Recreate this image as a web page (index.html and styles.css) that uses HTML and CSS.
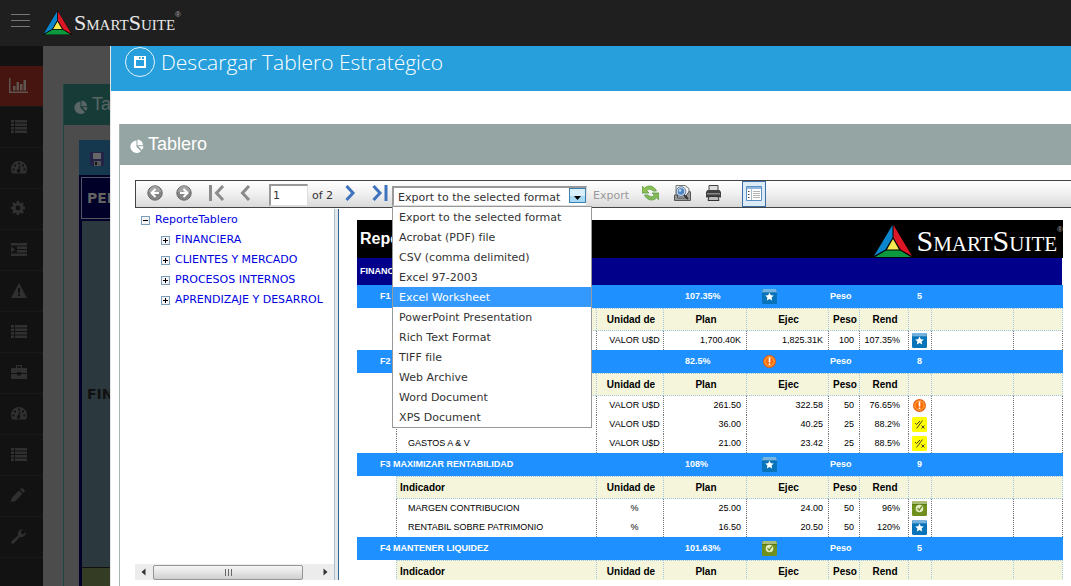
FILE: index.html
```
<!DOCTYPE html>
<html lang="es">
<head>
<meta charset="utf-8">
<title>SmartSuite - Tablero</title>
<link rel="stylesheet" href="styles.css">
</head>
<body>
<svg class="defs" aria-hidden="true">
  <symbol id="logo" viewBox="0 0 40 34">
    <path d="M20 0 0 34h40z" fill="#000"/>
    <path d="M19.500 1.500v12.500l-7 12L1 32.500z" fill="#0a86cc"/>
    <path d="M20.500 1.500v12.500l7 12L39 32.500z" fill="#dd1626"/>
    <path d="M2 33.500 13 27h14l11 6.500z" fill="#0d9a3e"/>
    <path d="M20 15.500 14 26h12z" fill="#f5ea50"/>
  </symbol>
  <symbol id="list" viewBox="0 0 16 13">
    <path d="M0 0h3v2.500H0zM4 0h12v2.500H4zM0 3.500h3V6H0zM4 3.500h12V6H4zM0 7h3v2.500H0zM4 7h12v2.500H4zM0 10.500h3V13H0zM4 10.500h12V13H4z"/>
  </symbol>
  <symbol id="gauge" viewBox="0 0 16 13">
    <path fill-rule="evenodd" d="M8 0a8 8 0 0 1 8 8c0 2-.5 3.200-1.200 4.500H1.200C.5 11.200 0 10 0 8a8 8 0 0 1 8-8zM7 1.500v2h2v-2zM3 3.500v2h2v-2zM1.500 7.500v2h2v-2zM12.500 7.500v2h2v-2zM11 3.500v2h2v-2zM8.500 4.500 7.300 8.200a1.800 1.800 0 1 0 1.400.3l.8-3.700z"/>
  </symbol>
  <symbol id="pie" viewBox="0 0 14 14">
    <path d="M6.500 1.500v6.300l4.400 4.400A6.200 6.200 0 1 1 6.500 1.500z"/><path d="M7.500 .5A6 6 0 0 1 13 6.300H7.500z"/><path d="M8.300 7.300h5.200a6 6 0 0 1-1.700 3.700z"/>
  </symbol>
  <symbol id="star" viewBox="0 0 15 15">
    <rect width="15" height="15" rx="1.500" fill="#0873b8"/><path d="M1 0h13l1 3H0z" fill="#75b2de"/><path d="M0 3h15v1H0z" fill="#2c86c0"/>
    <path d="m7.500 3.500 1.300 2.700 3 .3-2.200 2 .6 3-2.700-1.500-2.700 1.500.6-3-2.200-2 3-.3z" fill="#fff"/>
  </symbol>
  <symbol id="check" viewBox="0 0 15 15">
    <rect width="15" height="15" rx="1.500" fill="#6f901c"/><path d="M1 0h13l1 3H0z" fill="#a9bd76"/><path d="M0 3h15v1H0z" fill="#5b7c10"/>
    <circle cx="7.500" cy="7.500" r="3.800" fill="#e4ecc8"/><path d="m5.500 7.200 1.700 2 2.800-4" fill="none" stroke="#6f901c" stroke-width="1.300"/>
  </symbol>
  <symbol id="alert" viewBox="0 0 15 15">
    <circle cx="7.500" cy="7.500" r="6.500" fill="#e8590c"/><circle cx="7.500" cy="7.500" r="4.700" fill="#ff6a0c" stroke="#ffc04d"/>
    <path d="M6.700 3.500h1.600v5H6.700zM6.700 9.500h1.600V11H6.700z" fill="#fff"/>
  </symbol>
  <symbol id="warn" viewBox="0 0 15 15">
    <rect width="15" height="15" rx="1.500" fill="#ff0"/>
    <path d="m3 6 1.500 1.500L8 4M4.500 11.500l6-8M9.500 8.500l3 3m0-3-3 3" fill="none" stroke="#333" stroke-width=".9"/>
  </symbol>
  <symbol id="ball" viewBox="0 0 16 16">
    <circle cx="8" cy="8" r="7.200" fill="#858585" stroke="#666"/><path d="M2 7a6 6 0 0 1 12 0z" fill="#a3a3a3"/>
    <path d="M12 8H5m3.500-4L4.500 8l4 4" fill="none" stroke="#fff" stroke-width="2"/>
  </symbol>
  <symbol id="plus" viewBox="0 0 9 9">
    <rect x=".5" y=".5" width="8" height="8" fill="#f4f4f4" stroke="#7b9ebd"/><path d="M2 4h5v1H2zM4 2h1v5H4z" fill="#000"/>
  </symbol>
  <symbol id="minus" viewBox="0 0 9 9">
    <rect x=".5" y=".5" width="8" height="8" fill="#f4f4f4" stroke="#7b9ebd"/><path d="M2 4h5v1H2z" fill="#000"/>
  </symbol>
</svg>

<header class="topbar">
  <button class="burger" aria-label="Menú"><svg width="19" height="14" viewBox="0 0 19 14" stroke="#777"><path d="M0 .5h19M0 6.500h19M0 12.500h19"/></svg></button>
  <a class="brand" href="#"><svg width="29" height="25"><use href="#logo"/></svg><span class="brand-name">SmartSuite</span><sup class="reg">®</sup></a>
</header>

<div class="workspace">
  <nav class="sidebar" aria-label="Principal">
    <a class="side-item active" href="#" aria-label="Tablero"><svg width="20" height="15" viewBox="0 0 20 15"><path d="M0 0h1.500v13.500H19V15H0zM4 8h2.500v4.500H4zM7.500 4H10v8.500H7.500zM11 6h2.500v6.500H11zM14.500 2H17v10.500h-2.500z"/></svg></a>
    <a class="side-item" href="#" aria-label="Lista"><svg width="16" height="13"><use href="#list"/></svg></a>
    <a class="side-item" href="#" aria-label="Indicadores"><svg width="16" height="13"><use href="#gauge"/></svg></a>
    <a class="side-item" href="#" aria-label="Ajustes"><svg width="14" height="14" viewBox="0 0 14 14"><path fill-rule="evenodd" d="M5.800 0h2.400l.4 2 1 .4 1.800-1.100 1.500 1.500-1.100 1.800.4 1 1.800.2v2.400l-1.900.4-.4 1 1.100 1.700-1.500 1.500-1.700-1.100-1 .4-.4 1.900H5.800l-.4-1.900-1-.4-1.700 1.100-1.500-1.500 1.100-1.700-.4-1L0 8.200V5.800l1.900-.4.4-1L1.200 2.800l1.500-1.500 1.700 1.100 1-.4zM7 4.600a2.400 2.400 0 1 0 0 4.800 2.400 2.400 0 0 0 0-4.800z"/></svg></a>
    <a class="side-item" href="#" aria-label="Niveles"><svg width="16" height="13" viewBox="0 0 16 13"><path d="M0 0h16v2.500H0zM6 3.500h10V6H6zM6 7h10v2.500H6zM0 10.500h16V13H0zM0 3.500l4 3-4 3z"/></svg></a>
    <a class="side-item" href="#" aria-label="Alertas"><svg width="16" height="15" viewBox="0 0 16 15"><path fill-rule="evenodd" d="M8 0l8 15H0zM7 5v5h2V5zM7 11v2h2v-2z"/></svg></a>
    <a class="side-item" href="#" aria-label="Detalle"><svg width="16" height="13"><use href="#list"/></svg></a>
    <a class="side-item" href="#" aria-label="Proyectos"><svg width="16" height="14" viewBox="0 0 16 14"><path fill-rule="evenodd" d="M5 0h6v3h5v5h-6V7H6v1H0V3h5zM6.200 1.200V3h3.600V1.200zM0 9h6v1.500h4V9h6v5H0z"/></svg></a>
    <a class="side-item" href="#" aria-label="Medidores"><svg width="16" height="13"><use href="#gauge"/></svg></a>
    <a class="side-item" href="#" aria-label="Registros"><svg width="16" height="13"><use href="#list"/></svg></a>
    <a class="side-item" href="#" aria-label="Editar"><svg width="14" height="14" viewBox="0 0 14 14"><path d="M0 14l.8-4.200L8 2.600 11.400 6l-7.200 7.200zM9 1.600 10.300.4c.4-.4 1-.4 1.400 0l1.900 1.900c.4.400.4 1 0 1.400L12.400 5z"/></svg></a>
    <a class="side-item" href="#" aria-label="Herramientas"><svg width="15" height="15" viewBox="0 0 15 15"><path d="M.6 12.200 7 6.500C6.300 3 8.500 0 12 .3L9.800 2.500l.4 2.300 2.300.4L14.800 3C15.200 6.400 12 9 8.700 8.100l-5.900 6.300C1.500 15.800-.8 13.500.6 12.200z"/></svg></a>
  </nav>

  <main class="page">
    <section class="back-panel">
      <h2 class="back-title"><svg width="14" height="14"><use href="#pie"/></svg>Tablero</h2>
      <div class="back-board">
        <div class="back-tools"><svg width="14" height="14" viewBox="0 0 14 14"><path d="M0 0h14v14H1l-1-1z" fill="#232348"/><path d="M3 1h8v6H3z" fill="#666"/><path d="M4 9h7v5H4z" fill="#555"/><path d="M5 10h2v3H5z" fill="#111"/></svg></div>
        <div class="back-head">PERSPECTIVA</div>
        <div class="back-row">FINANCIERA</div>
        <div class="back-next"></div>
      </div>
    </section>
  </main>

  <div class="modal" role="dialog" aria-labelledby="modal-title">
    <header class="modal-head">
      <span class="modal-icon"><svg width="12" height="12" viewBox="0 0 12 12"><path fill="#fff" fill-rule="evenodd" d="M0 0h12v12H0zM2 4v6h8V4zM5 1v2h1.500V1zM8 1v2h2V1z"/></svg></span>
      <h1 class="modal-title" id="modal-title">Descargar Tablero Estratégico</h1>
    </header>
    <section class="panel">
      <h2 class="panel-title"><svg width="14" height="14"><use href="#pie"/></svg>Tablero</h2>
      <div class="viewer">
        <div class="toolbar">
          <div class="history">
            <button class="tool" aria-label="Back"><svg width="16" height="16"><use href="#ball"/></svg></button>
            <button class="tool flip" aria-label="Forward"><svg width="16" height="16"><use href="#ball"/></svg></button>
          </div>
          <div class="pager">
            <button class="tool" aria-label="First page"><svg width="16" height="16" viewBox="0 0 16 16" fill="none" stroke="#8b8b8b" stroke-width="3"><path d="M1.500 0v16M14 1 7.500 8l6.500 7"/></svg></button>
            <button class="tool" aria-label="Previous page"><svg width="11" height="16" viewBox="0 0 11 16" fill="none" stroke="#8b8b8b" stroke-width="3"><path d="M9 1 2.500 8 9 15"/></svg></button>
          </div>
          <label class="page-box"><input class="page-input" type="text" value="1" aria-label="Page"><span>of 2</span></label>
          <div class="pager next">
            <button class="tool" aria-label="Next page"><svg width="11" height="16" viewBox="0 0 11 16" fill="none" stroke="#3f73bd" stroke-width="3"><path d="M1.500 1 8 8l-6.500 7"/></svg></button>
            <button class="tool" aria-label="Last page"><svg width="16" height="16" viewBox="0 0 16 16" fill="none" stroke="#3f73bd" stroke-width="3"><path d="M14 0v16M1.500 1 8 8l-6.500 7"/></svg></button>
          </div>
          <div class="format">
            <select class="format-select" aria-label="Export format"><option>Export to the selected format</option></select>
            <svg class="format-arrow" width="17" height="15" viewBox="0 0 17 15"><rect x=".5" y=".5" width="16" height="14" fill="#d9f0fc" stroke="#3c7fb1"/><path d="M1 8h15v6H1z" fill="#a9daf4"/><path d="M5 8h7l-3.500 4z" fill="#000"/></svg>
            <ul class="format-menu" role="listbox" aria-label="Export format">
              <li role="option">Export to the selected format</li>
              <li role="option">Acrobat (PDF) file</li>
              <li role="option">CSV (comma delimited)</li>
              <li role="option">Excel 97-2003</li>
              <li role="option" class="chosen" aria-selected="true">Excel Worksheet</li>
              <li role="option">PowerPoint Presentation</li>
              <li role="option">Rich Text Format</li>
              <li role="option">TIFF file</li>
              <li role="option">Web Archive</li>
              <li role="option">Word Document</li>
              <li role="option">XPS Document</li>
            </ul>
          </div>
          <a class="export" href="#">Export</a>
          <div class="actions">
            <button class="tool" aria-label="Refresh"><svg width="17" height="16" viewBox="0 0 17 16"><path d="M0 1v7h7L4.700 5.700C6 4 9 3.500 11 6h3.500C12 .5 6-.5 2.400 3.200z" fill="#8cc152" stroke="#5d9a45" stroke-width=".8"/><path d="M17 15V8h-7l2.300 2.300C11 12 8 12.500 6 10H2.500c2.500 5.500 8.500 6.500 12.100 2.800z" fill="#84bb5a" stroke="#5d9a45" stroke-width=".8"/></svg></button>
            <button class="tool" aria-label="Print preview"><svg width="17" height="16" viewBox="0 0 17 16"><path d="M2 .5h9l4 3V12H2z" fill="#f2f2f2" stroke="#777"/><path d="M.5 10h3v3h9v-3l3-4 1 1v8.500H.5z" fill="#999" stroke="#555"/><circle cx="7" cy="6.500" r="4" fill="#4d86c4" stroke="#d5dde5" stroke-width="1.500"/><circle cx="7" cy="6.500" r="4.800" fill="none" stroke="#34547c" stroke-width=".7"/><circle cx="6" cy="5.500" r="1.300" fill="#bddcf5"/><path d="m10 10 4 4" stroke="#333" stroke-width="2"/></svg></button>
            <button class="tool" aria-label="Print"><svg width="15" height="16" viewBox="0 0 15 16"><path d="M3 .5h9V6H3z" fill="#ddd" stroke="#444"/><path d="M1.500 5h12L15 7v5.500H0V7z" fill="#3f3f3f"/><path d="M1 8h13v1.500H1z" fill="#888"/><path d="M3 11.500h9l1 4H2z" fill="#bbb" stroke="#333"/></svg></button>
          </div>
          <button class="map-toggle" aria-label="Document map" aria-pressed="true"><svg width="16" height="15" viewBox="0 0 16 15"><path d="M.5.500h15v14H.5z" fill="#fff" stroke="#5a8fc5"/><path d="M1 1h14v2H1z" fill="#8fb4df"/><path d="M5.500 3v11" stroke="#a9b8c8"/><path d="M2 5.500h1.500M2 8.500h1.500M2 11.500h1.500" stroke="#444"/><path d="M7 5.500h7M7 7.500h7M7 9.500h7M7 11.500h7" stroke="#aaa" stroke-width=".9"/></svg></button>
        </div>

        <div class="viewer-body">
          <aside class="docmap">
            <ul class="tree">
              <li><svg width="9" height="9"><use href="#minus"/></svg><a href="#">ReporteTablero</a></li>
              <li class="child"><svg width="9" height="9"><use href="#plus"/></svg><a href="#">FINANCIERA</a></li>
              <li class="child"><svg width="9" height="9"><use href="#plus"/></svg><a href="#">CLIENTES Y MERCADO</a></li>
              <li class="child"><svg width="9" height="9"><use href="#plus"/></svg><a href="#">PROCESOS INTERNOS</a></li>
              <li class="child"><svg width="9" height="9"><use href="#plus"/></svg><a href="#">APRENDIZAJE Y DESARROL</a></li>
            </ul>
            <div class="hscroll">
              <svg width="5" height="8" viewBox="0 0 5 8"><path d="M4.500 .5v7L.5 4z" fill="#333"/></svg>
              <div class="thumb"><svg width="9" height="7" viewBox="0 0 9 7" stroke="#666"><path d="M1.500 0v7M4.500 0v7M7.500 0v7"/></svg></div>
              <svg width="5" height="8" viewBox="0 0 5 8"><path d="M.5 .5v7l4-3.500z" fill="#333"/></svg>
            </div>
          </aside>
          <div class="splitter"></div>
          <div class="report">
            <div class="report-head">
              <h3 class="report-title">Reporte</h3>
              <div class="report-logo"><svg width="40" height="35"><use href="#logo"/></svg><span class="report-brand">SmartSuite</span><sup class="reg">®</sup></div>
            </div>
            <div class="perspective">FINANCIERA</div>
            <table class="grid">
              <colgroup><col class="c-pad"><col><col class="c-unit"><col class="c-plan"><col class="c-ejec"><col class="c-peso"><col class="c-rend"><col class="c-icon"><col class="c-gap"><col class="c-end"></colgroup>
              <tbody>
                <tr class="goal"><th colspan="2">F1</th><td class="pct" colspan="2">107.35%</td><td class="mark"><svg width="15" height="15"><use href="#star"/></svg></td><td class="weight" colspan="2">Peso</td><td>5</td><td colspan="2"></td></tr>
                <tr class="cols"><td></td><th class="name"></th><th>Unidad de</th><th>Plan</th><th>Ejec</th><th>Peso</th><th>Rend</th><th></th><th></th><th class="last"></th></tr>
                <tr class="item"><td></td><td class="name"></td><td class="unit">VALOR U$D</td><td>1,700.40K</td><td>1,825.31K</td><td>100</td><td class="rend">107.35%</td><td class="icon"><svg width="15" height="15"><use href="#star"/></svg></td><td></td><td class="last"></td></tr>
                <tr class="goal"><th colspan="2">F2</th><td class="pct" colspan="2">82.5%</td><td class="mark"><svg width="15" height="15"><use href="#alert"/></svg></td><td class="weight" colspan="2">Peso</td><td>8</td><td colspan="2"></td></tr>
                <tr class="cols"><td></td><th class="name"></th><th>Unidad de</th><th>Plan</th><th>Ejec</th><th>Peso</th><th>Rend</th><th></th><th></th><th class="last"></th></tr>
                <tr class="item"><td></td><td class="name"></td><td class="unit">VALOR U$D</td><td>261.50</td><td>322.58</td><td>50</td><td class="rend">76.65%</td><td class="icon"><svg width="15" height="15"><use href="#alert"/></svg></td><td></td><td class="last"></td></tr>
                <tr class="item"><td></td><td class="name"></td><td class="unit">VALOR U$D</td><td>36.00</td><td>40.25</td><td>25</td><td class="rend">88.2%</td><td class="icon"><svg width="15" height="15"><use href="#warn"/></svg></td><td></td><td class="last"></td></tr>
                <tr class="item"><td></td><td class="name">GASTOS A &amp; V</td><td class="unit">VALOR U$D</td><td>21.00</td><td>23.42</td><td>25</td><td class="rend">88.5%</td><td class="icon"><svg width="15" height="15"><use href="#warn"/></svg></td><td></td><td class="last"></td></tr>
                <tr class="goal"><th colspan="2">F3 MAXIMIZAR RENTABILIDAD</th><td class="pct" colspan="2">108%</td><td class="mark"><svg width="15" height="15"><use href="#star"/></svg></td><td class="weight" colspan="2">Peso</td><td>9</td><td colspan="2"></td></tr>
                <tr class="cols"><td></td><th class="name">Indicador</th><th>Unidad de</th><th>Plan</th><th>Ejec</th><th>Peso</th><th>Rend</th><th></th><th></th><th class="last"></th></tr>
                <tr class="item"><td></td><td class="name">MARGEN CONTRIBUCION</td><td class="unit">%</td><td>25.00</td><td>24.00</td><td>50</td><td class="rend">96%</td><td class="icon"><svg width="15" height="15"><use href="#check"/></svg></td><td></td><td class="last"></td></tr>
                <tr class="item"><td></td><td class="name">RENTABIL SOBRE PATRIMONIO</td><td class="unit">%</td><td>16.50</td><td>20.50</td><td>50</td><td class="rend">120%</td><td class="icon"><svg width="15" height="15"><use href="#star"/></svg></td><td></td><td class="last"></td></tr>
                <tr class="goal"><th colspan="2">F4 MANTENER LIQUIDEZ</th><td class="pct" colspan="2">101.63%</td><td class="mark"><svg width="15" height="15"><use href="#check"/></svg></td><td class="weight" colspan="2">Peso</td><td>5</td><td colspan="2"></td></tr>
                <tr class="cols"><td></td><th class="name">Indicador</th><th>Unidad de</th><th>Plan</th><th>Ejec</th><th>Peso</th><th>Rend</th><th></th><th></th><th class="last"></th></tr>
              </tbody>
            </table>
          </div>
        </div>
      </div>
    </section>
  </div>
</div>
</body>
</html>
```

FILE: styles.css
```
* { box-sizing: border-box; }

body {
  margin: 0;
  height: 100vh;
  display: flex;
  flex-direction: column;
  overflow: hidden;
  background: #4c4c4c;
  font-family: "Liberation Sans", Arial, sans-serif;
}

h1, h2, h3, ul { margin: 0; padding: 0; font-weight: 400; }
ul { list-style: none; }
svg { display: block; flex: none; }
button { padding: 0; border: 0; background: none; }
a { text-decoration: none; }
.defs { position: absolute; width: 0; height: 0; }

/* Top bar */
.topbar {
  flex: none;
  display: flex;
  align-items: flex-start;
  height: 46px;
  padding: 10px 11px;
  gap: 13px;
  background: #1f1f1f;
}
.burger { padding-top: 4px; }
.brand { display: flex; align-items: flex-start; color: #e8e8e8; }
.brand-name {
  padding-left: 2px;
  font: 22px/25px "Liberation Serif", serif;
  font-variant: small-caps;
}
.reg { font: 8px/8px "Liberation Sans", sans-serif; color: #aaa; vertical-align: top; }
.brand .reg { padding-top: 1px; }

/* Workspace behind the dialog */
.workspace { position: relative; flex: 1; display: flex; min-height: 0; }
.sidebar { width: 43px; flex: none; padding-top: 20px; background: #121212; overflow: hidden; }
.side-item {
  display: flex;
  align-items: center;
  height: 41px;
  padding: 0 0 2px 11px;
  border-bottom: 1px solid #191919;
  fill: #303030;
}
.side-item.active { padding-left: 9px; background: #47150f; fill: #5f5550; }
.page { flex: 1; padding: 38px 0 0 20px; display: flex; }
.back-panel { flex: 1; display: flex; flex-direction: column; border-left: 1px solid #1e4742; }
.back-title {
  display: flex;
  align-items: center;
  gap: 4px;
  height: 41px;
  padding-left: 10px;
  background: #173c38;
  color: #5a6665;
  fill: #5a6665;
  font-size: 18px;
}
.back-title svg { margin-top: 4px; }
.back-board { flex: 1; display: flex; flex-direction: column; margin: 15px 0 0 15px; background: #000028; }
.back-tools { height: 35px; padding: 12px 11px; background: #16384f; }
.back-head, .back-row { font: bold 14px/40px "DejaVu Sans", Verdana, sans-serif; padding-left: 5px; }
.back-head { margin: 2px 0 2px 2px; border: 1px solid #55555f; color: #626262; }
.back-row {
  flex: 1;
  display: flex;
  align-items: center;
  margin-left: 3px;
  background: #2b383e;
  color: #111;
  border-bottom: 1px solid #111;
}
.back-next { height: 18px; margin-left: 3px; background: #343c24; }

/* Dialog */
.modal {
  position: absolute;
  inset: 0 0 0 110px;
  display: flex;
  flex-direction: column;
  background: #fff;
  border-left: 1px solid #e4e4e4;
}
.modal-head {
  flex: none;
  display: flex;
  align-items: flex-start;
  gap: 6px;
  height: 45px;
  padding: 1px 14px;
  background: #269fdc;
  color: #fff;
}
.modal-icon {
  display: flex;
  align-items: center;
  justify-content: center;
  width: 30px;
  height: 30px;
  border: 1px solid #e2f2fb;
  border-radius: 50%;
}
.modal-title { font: 300 21px/30px "Open Sans", "Noto Sans", sans-serif; white-space: nowrap; }
.panel {
  flex: 1;
  display: flex;
  flex-direction: column;
  min-height: 0;
  margin: 33px 0 0 8px;
  border-left: 1px solid #a8b5b3;
}
.panel-title {
  flex: none;
  display: flex;
  align-items: center;
  gap: 4px;
  height: 41px;
  padding-left: 10px;
  background: #95a5a3;
  color: #fff;
  fill: #fff;
  font-size: 18px;
}
.panel-title svg { margin-top: 3px; }
.viewer {
  flex: 1;
  display: flex;
  flex-direction: column;
  min-height: 0;
  padding: 15px 0 6px 15px;
  font: 11px/20px "DejaVu Sans", Verdana, sans-serif;
}

/* Toolbar */
.toolbar {
  flex: none;
  display: flex;
  align-items: flex-start;
  height: 28px;
  border: 1px solid #444;
  border-right: 0;
  background: linear-gradient(#fff, #f0f0f0 50%, #d9d9d9);
  color: #333;
}
.history, .pager, .actions { display: flex; padding-top: 4px; }
.history { gap: 13px; padding-left: 11px; }
.flip { transform: scaleX(-1); }
.pager { gap: 15px; padding-left: 17px; }
.pager.next { gap: 16px; padding-left: 12px; }
.page-box { display: flex; gap: 4px; padding: 3px 0 0 18px; line-height: 24px; }
.page-input {
  width: 39px;
  height: 22px;
  padding: 2px;
  border: 2px solid #999;
  border-right: 1px solid #ddd;
  border-bottom: 1px solid #ddd;
  background: #fff;
  font: inherit;
  color: #333;
}
.format { position: relative; margin: 5px 0 0 4px; width: 195px; }
.format-select {
  display: block;
  width: 100%;
  height: 20px;
  padding: 0 0 1px 4px;
  appearance: none;
  border: 2px solid #999;
  border-right: 1px solid #ddd;
  border-bottom: 1px solid #ddd;
  border-radius: 0;
  background: #fff;
  font: inherit;
  color: #333;
}
.format-arrow { position: absolute; top: 2px; right: 1px; }
.format-menu {
  position: absolute;
  z-index: 2;
  top: 20px;
  left: 0;
  width: 200px;
  border: 1px solid #999;
  background: #fff;
}
.format-menu li { height: 20px; padding-left: 6px; line-height: 21px; white-space: nowrap; }
.format-menu .chosen { background: #3399ff; color: #fff; }
.export { padding: 5px 0 0 6px; color: #999; }
.actions { gap: 15px; padding-left: 13px; }
.map-toggle {
  display: flex;
  justify-content: center;
  width: 24px;
  height: 26px;
  margin-left: 21px;
  padding-top: 4px;
  border: 1px solid #3a6ea5;
  background: #dcecf6;
}

/* Document map */
.viewer-body { flex: 1; display: flex; min-height: 0; padding-top: 1px; }
.docmap { width: 199px; flex: none; display: flex; flex-direction: column; justify-content: space-between; overflow: hidden; }
.tree { padding: 1px 0 0 6px; }
.tree li { display: flex; align-items: center; gap: 5px; height: 20px; line-height: 22px; white-space: nowrap; }
.tree .child { padding-left: 20px; }
.tree a { color: #0000e0; }
.hscroll {
  display: flex;
  align-items: center;
  justify-content: space-between;
  height: 16px;
  padding: 0 6px;
  background: #ececec;
}
.thumb {
  display: flex;
  align-items: center;
  justify-content: center;
  width: 150px;
  height: 15px;
  margin-right: 13px;
  border: 1px solid #959595;
  border-radius: 2px;
  background: linear-gradient(#f5f5f5, #e4e4e4 50%, #cfcfcf);
}
.splitter {
  flex: none;
  width: 5px;
  border-left: 1px solid #a9bfcc;
  border-right: 1px solid #33628c;
  background: #e4e7ea;
}

/* Report */
.report { flex: 1; min-width: 0; padding: 11px 8px 0 18px; overflow: hidden; font: 9px/19px "Liberation Sans", Arial, sans-serif; }
.report-head { display: flex; justify-content: space-between; height: 38px; padding-left: 3px; background: #000; color: #fff; }
.report-title { font-size: 16px; font-weight: 700; line-height: 38px; }
.report-logo { display: flex; align-items: flex-start; padding-top: 3px; }
.report-logo .reg { padding-top: 3px; }
.report-brand { padding-left: 3px; font: 30px/35px "Liberation Serif", serif; font-variant: small-caps; }
.perspective { height: 27px; margin-right: 1px; padding-left: 3px; background: #00008b; color: #fff; font-weight: 700; line-height: 27px; }
.grid { width: 100%; table-layout: fixed; border-collapse: separate; border-spacing: 0; }
.grid td, .grid th { padding: 0; white-space: nowrap; }
.c-pad { width: 39px; }
.c-unit { width: 67px; }
.c-plan { width: 83px; }
.c-ejec { width: 82px; }
.c-peso { width: 31px; }
.c-rend { width: 49px; }
.c-icon { width: 23px; }
.c-gap { width: 82px; }
.c-end { width: 50px; }
.goal { height: 23px; background: #1e90ff; color: #fff; font-weight: 700; text-align: center; }
.goal th { padding-left: 23px; text-align: left; }
.goal .pct { padding-left: 89px; text-align: left; }
.goal .mark { padding-left: 16px; }
.goal .weight { padding-left: 2px; text-align: left; }
.cols { height: 23px; font-size: 10px; }
.cols th { padding-left: 2px; border: 1px dotted #a3c8e0; border-right: 0; background: #f5f5dc; }
.cols th.last { border-right: 1px dotted #a3c8e0; }
.cols th.name { padding-left: 3px; text-align: left; }
.item { height: 19px; }
.item td { padding-right: 5px; text-align: right; }
.item td + td { border-left: 1px dotted #777; }
.item td.last { border-right: 1px dotted #777; }
.item td.name { padding-left: 11px; text-align: left; }
.item td.unit { padding: 0 0 0 9px; text-align: center; }
.item td.rend { padding-right: 8px; }
.item td.icon { padding: 0 0 0 3px; }
```
